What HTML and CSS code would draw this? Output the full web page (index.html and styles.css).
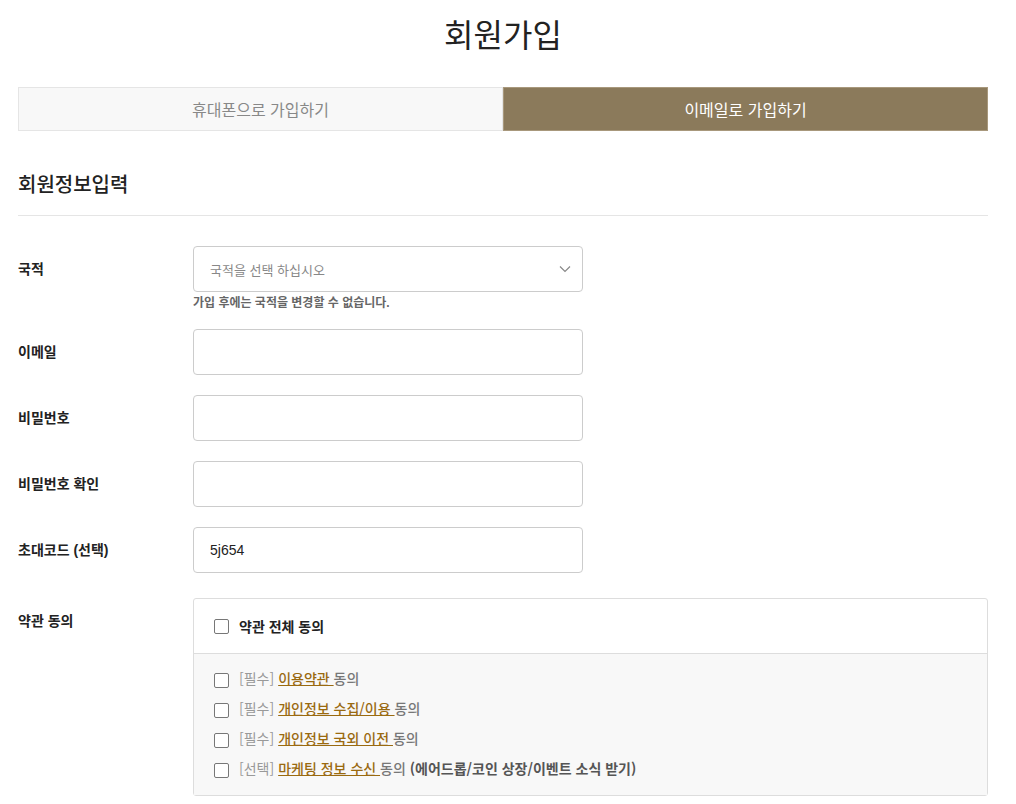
FILE: index.html
```html
<!DOCTYPE html>
<html lang="ko">
<head>
    <meta charset="UTF-8">
    <meta name="viewport" content="width=device-width, initial-scale=1.0">
    <title>회원가입</title>
    <link rel="stylesheet" href="styles.css">
</head>
<body>
    <div class="container">
        <h1>회원가입</h1>

        <div class="tabs">
            <div class="tab">휴대폰으로 가입하기</div>
            <div class="tab active">이메일로 가입하기</div>
        </div>

        <h2 class="section-title">회원정보입력</h2>

        <div class="form-group first">
            <label>국적</label>
            <div class="field">
                <div class="select">
                    <span>국적을 선택 하십시오</span>
                    <svg width="12" height="8" viewBox="0 0 12 8"><path d="M1 1.5 L6 6.5 L11 1.5" fill="none" stroke="#888" stroke-width="1.2"/></svg>
                </div>
                <p class="help">가입 후에는 국적을 변경할 수 없습니다.</p>
            </div>
        </div>

        <div class="form-group">
            <label>이메일</label>
            <div class="field"><input type="text"></div>
        </div>

        <div class="form-group">
            <label>비밀번호</label>
            <div class="field"><input type="password"></div>
        </div>

        <div class="form-group">
            <label>비밀번호 확인</label>
            <div class="field"><input type="password"></div>
        </div>

        <div class="form-group">
            <label>초대코드 (선택)</label>
            <div class="field"><input type="text" value="5j654"></div>
        </div>

        <div class="form-group terms-group">
            <label>약관 동의</label>
            <div class="terms">
                <div class="terms-all">
                    <span class="box"></span>
                    <span>약관 전체 동의</span>
                </div>
                <div class="terms-list">
                    <div class="term"><span class="box"></span><span class="tag">[필수]</span> <a href="#">이용약관 </a><span class="agree">동의</span></div>
                    <div class="term"><span class="box"></span><span class="tag">[필수]</span> <a href="#">개인정보 수집/이용 </a><span class="agree">동의</span></div>
                    <div class="term"><span class="box"></span><span class="tag">[필수]</span> <a href="#">개인정보 국외 이전 </a><span class="agree">동의</span></div>
                    <div class="term"><span class="box"></span><span class="tag">[선택]</span> <a href="#">마케팅 정보 수신 </a><span class="agree">동의</span> <strong>(에어드롭/코인 상장/이벤트 소식 받기)</strong></div>
                </div>
            </div>
        </div>
    </div>
</body>
</html>
```

FILE: styles.css
```css
body {
    margin: 0;
    font-family: "Liberation Sans", "Noto Sans CJK KR", sans-serif;
    background: #fff;
    color: #222;
}

.container {
    width: 970px;
    padding: 0 18px;
}

h1 {
    margin: 10px 0 0;
    font-size: 32px;
    font-weight: 400;
    text-align: center;
    line-height: 46px;
    color: #222;
    font-family: "Noto Sans CJK KR", sans-serif;
}

.tabs {
    display: flex;
    margin-top: 31px;
}

.tab {
    flex: 1;
    height: 42px;
    line-height: 42px;
    text-align: center;
    font-size: 16px;
    color: #888;
    background: #f8f8f8;
    border: 1px solid #e5e5e5;
    font-family: "Noto Sans CJK KR", sans-serif;
}

.tab.active {
    background: #8b7a5b;
    border-color: #a8987c;
    color: #fff;
}

.section-title {
    margin: 0;
    padding: 38px 0 16px;
    font-size: 20px;
    font-weight: 500;
    line-height: 30px;
    border-bottom: 1px solid #e5e5e5;
    font-family: "Noto Sans CJK KR", sans-serif;
}

.form-group {
    display: flex;
    margin-top: 20px;
}

.form-group.first {
    margin-top: 30px;
}

.form-group label {
    width: 175px;
    font-size: 14px;
    font-weight: bold;
    line-height: 46px;
    color: #222;
}

.field {
    width: 390px;
}

.select, input {
    box-sizing: border-box;
    width: 390px;
    height: 46px;
    border: 1px solid #ccc;
    border-radius: 4px;
    background: #fff;
}

.select {
    display: flex;
    justify-content: space-between;
    align-items: center;
    padding: 0 11px 0 16px;
    font-size: 13px;
    color: #888;
}

input {
    padding: 0 16px;
    font-size: 14px;
    font-family: "Liberation Sans", sans-serif;
    color: #222;
    outline: none;
}

.help {
    margin: 4px 0 -2px;
    font-size: 12px;
    font-weight: bold;
    color: #666;
    line-height: 15px;
}

.terms-group {
    margin-top: 25px;
}

.terms {
    flex: 1;
    border: 1px solid #ddd;
    border-radius: 3px;
}

.terms-all {
    display: flex;
    align-items: center;
    height: 54px;
    padding: 0 20px;
    font-size: 14px;
    font-weight: bold;
    color: #222;
    border-bottom: 1px solid #ddd;
}

.terms-list {
    background: #f8f8f8;
    padding: 9px 20px 12px;
}

.box {
    display: inline-block;
    box-sizing: border-box;
    width: 15px;
    height: 15px;
    border: 1px solid #777;
    border-radius: 2px;
    background: #fff;
    margin-right: 10px;
    vertical-align: middle;
}

.terms-all .box {
    flex-shrink: 0;
}

.term {
    height: 30px;
    line-height: 30px;
    font-size: 14px;
    font-family: "Noto Sans CJK KR", sans-serif;
}

.tag {
    color: #999;
}

.term a {
    color: #9a6a10;
    font-weight: 500;
    text-decoration: underline;
}

.agree {
    color: #777;
    font-weight: 500;
}

.term strong {
    color: #555;
    font-weight: bold;
}
```
